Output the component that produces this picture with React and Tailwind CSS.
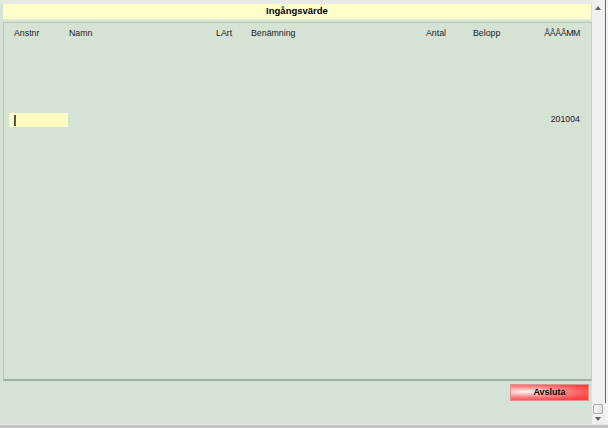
export default function App() {
  const font = { fontFamily: '"Liberation Sans", Arial, sans-serif' };
  return (
    <div className="w-[608px] h-[428px] flex flex-col bg-[#f0f0f0] overflow-hidden" style={font}>
      <div className="flex h-[424px]">
        {/* main */}
        <div className="w-[592px] flex flex-col bg-[#d5e3d5]">
          <div className="h-[4px] bg-[#e6ebe6]" />
          <div className="ml-[3px] w-[588px] h-[16px] bg-[#ffffcc] border-b border-[#e4ecd8] flex items-center justify-center text-[9.5px] font-bold text-black">
            Ingångsvärde
          </div>
          <div className="h-[2px]" />
          <div className="ml-[3px] w-[589px] h-[359px] border-t border-l border-[#b9c9b9] border-b-2 border-b-[#9fb09f] border-r border-r-[#c4d2c4] flex flex-col text-[8.8px] text-[#1a1a1a]">
            <div className="flex items-center h-[13px] mt-[4px] pl-[10px]">
              <div className="w-[55px]">Anstnr</div>
              <div className="w-[147px]">Namn</div>
              <div className="w-[35px]">LArt</div>
              <div className="w-[175px]">Benämning</div>
              <div className="w-[47px]">Antal</div>
              <div className="w-[60px]">Belopp</div>
              <div className="w-[47px] text-right tracking-[-0.4px]">ÅÅÅÅMM</div>
            </div>
            <div className="flex items-center h-[14px] mt-[73px] pl-[5px]">
              <div className="w-[59px] h-[14px] bg-[#fdfdc3] flex items-center pl-[5px]">
                <div className="w-[2px] h-[11px] bg-[#555]" />
              </div>
              <div className="w-[512px] text-right">201004</div>
            </div>
          </div>
          <div className="flex justify-end pr-[3px] mt-[3px]">
            <button className="w-[79px] h-[17px] border border-[#e39090] bg-[radial-gradient(ellipse_at_18%_45%,#ffffff_0%,#ffc4c4_18%,#ff7878_50%,#ff4444_80%,#ff3a3a_100%)] text-[9px] font-bold text-black flex items-center justify-center">
              Avsluta
            </button>
          </div>
        </div>
        {/* scrollbar */}
        <div className="w-[13px] relative bg-[#f0f0f0]">
          <svg className="absolute left-[3px] top-[6px]" width="6" height="4" viewBox="0 0 6 4">
            <path d="M0 4 L3 0 L6 4 Z" fill="#606060" />
          </svg>
          <div className="absolute left-[1px] top-[404px] w-[10px] h-[10px] rounded-[2px] border border-[#a8a8a8] bg-[linear-gradient(to_right,#fafafa,#e2e2e2)]" />
          <svg className="absolute left-[3px] top-[417px]" width="6" height="4" viewBox="0 0 6 4">
            <path d="M0 0 L6 0 L3 4 Z" fill="#606060" />
          </svg>
        </div>
        <div className="w-[1px] h-[403px] bg-[#6a6a6a]" />
        <div className="w-[2px] bg-[#f4f4f4]" />
      </div>
      <div className="h-[1px] bg-[#e6e6e6]" />
      <div className="flex-1 bg-[#c6c6c6]" />
    </div>
  );
}
